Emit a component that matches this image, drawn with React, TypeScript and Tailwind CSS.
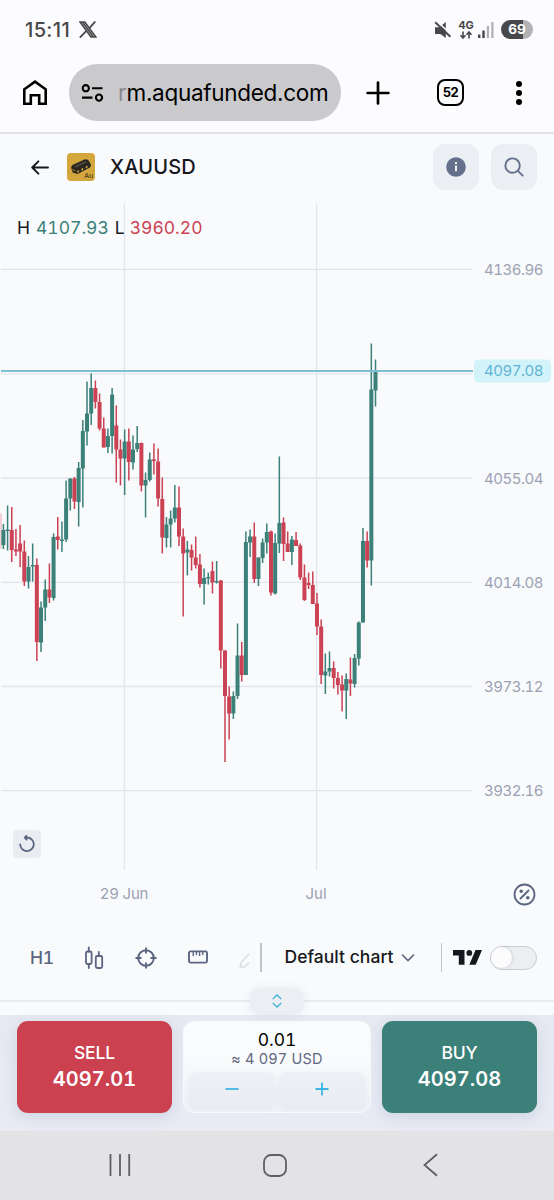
import type { ReactNode } from "react";

type Candle = ["u" | "d", number, number, number, number];

// direction, high, body top, body bottom, low (all in chart pixels)
const CANDLES: Candle[] = [
  ["u", 524, 530, 545, 549],
  ["u", 505.5, 529.5, 531, 550.5],
  ["d", 507, 530, 550, 562],
  ["d", 529, 549.5, 551.5, 556],
  ["d", 525, 543.5, 551.5, 567],
  ["d", 540.5, 551.5, 581.5, 586],
  ["u", 556, 567, 581.5, 588.5],
  ["u", 543.5, 565, 566.5, 581.5],
  ["d", 558.5, 565, 642, 661],
  ["u", 601.5, 607.5, 642.5, 652],
  ["u", 579.5, 589.5, 607.5, 621],
  ["d", 563.5, 589.5, 597.5, 603],
  ["u", 533.5, 537, 598, 600.5],
  ["d", 517, 536.5, 540, 549.5],
  ["u", 521.5, 539.5, 541, 552],
  ["u", 480.5, 498.5, 539.5, 542],
  ["u", 478.5, 478.5, 498.5, 510.5],
  ["d", 477, 478.5, 501.5, 509],
  ["u", 462, 468, 502, 526.5],
  ["u", 420, 431, 468.5, 507.5],
  ["u", 381.5, 413.5, 431.5, 445.5],
  ["u", 373.5, 388, 413.5, 425],
  ["d", 380.5, 388, 402, 408.5],
  ["d", 393.5, 402, 428.5, 430.5],
  ["d", 417.5, 428.5, 447.5, 447.5],
  ["u", 428.5, 436, 447, 453],
  ["u", 388, 394.5, 436, 453.5],
  ["d", 405.5, 425.5, 449.5, 482.5],
  ["d", 439.5, 449.5, 458.5, 485.5],
  ["u", 429.5, 441.5, 458.5, 495],
  ["d", 428.5, 441.5, 462, 480.5],
  ["u", 435.5, 449.5, 462.5, 469.5],
  ["u", 426, 443, 449, 452],
  ["d", 442.5, 443, 485.5, 491.5],
  ["u", 472.5, 480, 485.5, 517.5],
  ["u", 452.5, 459.5, 480, 481.5],
  ["d", 443.5, 459.5, 461, 474.5],
  ["d", 448.5, 461.5, 498.5, 506.5],
  ["d", 477.5, 499, 537.5, 553.5],
  ["u", 517, 524.5, 538, 547.5],
  ["u", 510.5, 518.5, 524.5, 547.5],
  ["u", 485, 507.5, 518.5, 522.5],
  ["d", 486.5, 507.5, 536.5, 546],
  ["d", 528.5, 536.5, 553.5, 616.5],
  ["u", 541, 549.5, 552.5, 575.5],
  ["d", 544.5, 550, 557.5, 570.5],
  ["d", 536.5, 557.5, 565, 568.5],
  ["d", 554, 564.5, 584, 587.5],
  ["u", 568.5, 578, 584, 604.5],
  ["u", 572.5, 577, 578.5, 584.5],
  ["d", 561.5, 571, 582.5, 593.5],
  ["u", 561, 581, 582.5, 583.5],
  ["d", 580, 580.5, 650.5, 668.5],
  ["d", 650.5, 650.5, 696, 762],
  ["d", 686.5, 696.5, 713.5, 739.5],
  ["u", 691.5, 696, 713.5, 719],
  ["u", 623.5, 655.5, 696, 699],
  ["d", 642, 655.5, 675, 681.5],
  ["u", 531.5, 542, 675, 675],
  ["u", 529.5, 536.5, 542.5, 557],
  ["d", 522.5, 536.5, 579, 583],
  ["u", 557.5, 557.5, 579, 586],
  ["u", 538.5, 542.5, 558, 563],
  ["u", 523.5, 532, 542.5, 553.5],
  ["d", 530.5, 531.5, 592.5, 595.5],
  ["u", 533.5, 543, 593.5, 594.5],
  ["u", 456.5, 523, 543.5, 553],
  ["d", 517.5, 522.5, 544, 561],
  ["d", 531.5, 543.5, 552, 552],
  ["u", 536, 539.5, 552, 565],
  ["d", 532, 540, 546, 546],
  ["d", 543.5, 545.5, 577.5, 580],
  ["d", 564.5, 577.5, 600, 601],
  ["d", 572.5, 583, 585, 589],
  ["d", 571.5, 585, 604, 604],
  ["d", 593, 603.5, 626.5, 635],
  ["d", 619.5, 626.5, 675, 684],
  ["u", 653.5, 671.5, 675.5, 694],
  ["u", 651.5, 668, 671.5, 676.5],
  ["d", 661.5, 668, 678, 688.5],
  ["d", 672, 678, 685, 694.5],
  ["d", 675.5, 684.5, 690.5, 711.5],
  ["u", 673.5, 679, 690.5, 719],
  ["d", 657.5, 679.5, 683.5, 696],
  ["u", 654, 658, 684, 687.5],
  ["u", 621.5, 622.5, 658.5, 665.5],
  ["u", 528, 541, 622.5, 622.5],
  ["d", 531.5, 541, 560.5, 567.5],
  ["u", 343.5, 389.5, 560.5, 585.5],
  ["u", 359.5, 370.5, 390.5, 406.5],
];

const UP = "#3b8179";
const DOWN = "#cb4254";

const PRICE_LINES = [
  { y: 269.3, label: "4136.96" },
  { y: 373.8, label: "" },
  { y: 478, label: "4055.04" },
  { y: 582.3, label: "4014.08" },
  { y: 686.5, label: "3973.12" },
  { y: 790.7, label: "3932.16" },
];

export default function App() {
  return (
    <div className="flex h-[1200px] w-[554px] flex-col overflow-hidden bg-[#f9fafc] font-['Inter',sans-serif] text-[#16181d]">
      <StatusBar />
      <BrowserBar />
      <SymbolHeader />
      <PriceChart />
      <TimeAxis />
      <ChartToolbar />
      <TradePanel />
      <SystemNav />
    </div>
  );
}

function StatusBar() {
  return (
    <div className="flex h-[60px] items-center justify-between bg-[#fcfcfe] pb-px pl-[25px] pr-[21px] text-[#48484a]">
      <div className="flex items-center gap-[9px]">
        <span className="text-[20px] font-medium leading-none tracking-[0.35px]">15:11</span>
        <svg className="h-[17px] w-[18px]" viewBox="0 0 18 17" fill="none" stroke="currentColor" strokeWidth="1.6">
          <path d="M1 1h4.8l11 15H12zM3.4 1l11 15" />
          <path d="M16.3.5 10.2 7.4M7.4 9.9.8 16.6" strokeWidth="1.8" />
        </svg>
      </div>
      <div className="flex items-center">
        <svg className="h-[18px] w-[18px]" viewBox="0 0 18 18" fill="currentColor">
          <path d="M1 6.2h4.4L11.8 1v16L6.5 13H1z" />
          <path d="M2.9.2 17.9 14.2" stroke="#fcfcfe" strokeWidth="1.6" />
          <path d="m1.2 1.2 15.2 14.6" stroke="currentColor" strokeWidth="1.9" />
        </svg>
        <div className="ml-[5px] flex w-[18px] flex-col items-center">
          <span className="text-[11px] font-bold leading-[9px]">4G</span>
          <svg className="mt-px h-2 w-3.5" viewBox="0 0 14 8" fill="none" stroke="currentColor" strokeWidth="1.6">
            <path d="M4 .5v6M1.5 4.3 4 7l2.5-2.7M10 7.5v-6M7.5 3.7 10 1l2.5 2.7" />
          </svg>
        </div>
        <svg className="ml-0.5 h-[18px] w-[18px]" viewBox="0 0 18 18" fill="currentColor">
          <rect x="1" y="13.5" width="2.4" height="3.5" />
          <rect x="5.3" y="9.5" width="2.4" height="7.5" />
          <rect x="9.8" y="5" width="2.2" height="12" fill="#b0b0b3" />
          <rect x="14.3" y="1" width="2.2" height="16" fill="#b0b0b3" />
        </svg>
        <div className="ml-[6px] flex h-[19px] w-[32px] items-center justify-center rounded-full bg-linear-to-r from-[#48484a] from-68% to-[#b2b2b4] to-68% text-[13.5px] font-bold leading-none text-white">
          69
        </div>
      </div>
    </div>
  );
}

function BrowserBar() {
  return (
    <div className="flex h-[74px] items-center border-b-2 border-[#e0e1e9] bg-[#fcfcfe] pl-[22px] pb-[7px] text-black">
      <svg className="h-[27px] w-[26px]" viewBox="0 0 26 27" fill="none" stroke="currentColor" strokeWidth="2.6">
        <path d="M2.3 10.3v14.4h6.5v-8.4h8.4v8.4h6.5V10.3L13 2.7z" />
      </svg>
      <div className="ml-[21px] flex h-[57px] w-[272px] shrink-0 items-center rounded-full bg-[#cacacc] pl-3">
        <svg className="h-5 w-[23px]" viewBox="0 0 23 20" fill="none" stroke="currentColor" strokeWidth="2.1">
          <circle cx="4.8" cy="5.2" r="3.1" />
          <circle cx="18" cy="14.6" r="3.1" />
          <path d="M11 5.2h10.5M1 14.6h10.5" />
        </svg>
        <span className="ml-[14px] whitespace-nowrap text-[22.5px] tracking-[-0.3px]">
          <span className="text-[#8a8a8c]">r</span>m.aquafunded.com
        </span>
      </div>
      <svg className="ml-[25px] h-6 w-6" viewBox="0 0 24 24" stroke="currentColor" strokeWidth="2.7" strokeLinecap="round">
        <path d="M12 1.6v20.8M1.6 12h20.8" />
      </svg>
      <div className="ml-[47px] flex h-[27px] w-[27px] items-center justify-center rounded-[8px] border-[2.5px] border-black text-[13px] font-bold leading-none tracking-[-0.6px]">
        52
      </div>
      <div className="ml-[52px] flex flex-col gap-[3px]">
        <span className="h-[6px] w-[6px] rounded-full bg-black" />
        <span className="h-[6px] w-[6px] rounded-full bg-black" />
        <span className="h-[6px] w-[6px] rounded-full bg-black" />
      </div>
    </div>
  );
}

function SymbolHeader() {
  return (
    <div className="flex h-[69px] shrink-0 items-center pl-[31px] pr-[17px] pb-[3px]">
      <svg className="h-[15px] w-[18px]" viewBox="0 0 18 15" fill="none" stroke="currentColor" strokeWidth="1.9" strokeLinecap="round" strokeLinejoin="round">
        <path d="M17 7.5H1.2M7.4 1.3 1.2 7.5l6.2 6.2" />
      </svg>
      <svg className="ml-[18px] h-[28px] w-[28px]" viewBox="0 0 28 28">
        <rect width="28" height="28" rx="4" fill="#d3a63e" />
        <path d="M4 14.2 5.5 12 18 6.3l3 .4 3 4.8-.6 2.7L10.6 21l-4.9-1.6z" fill="#29261f" />
        <path d="m6.8 13.4 11-5.2 2.6.8L9.5 14.6z" fill="#4a463d" />
        <path d="m9.7 19 1.6-2 1 1.1-1.2 1.6zM14 17l1.5-2.2 1 1-1.2 1.9zM18.4 14.8l1.5-2.2 1 1-1.2 1.9z" fill="#d3a63e" />
        <path d="m5.2 16.6 3.4 1.2" stroke="#d3a63e" strokeWidth=".7" />
        <text x="17.2" y="24.6" fontSize="6.8" fontWeight="500" fill="#4a3a17">Au</text>
      </svg>
      <h1 className="ml-[15px] text-[20px] font-medium leading-none tracking-[0.2px]">XAUUSD</h1>
      <div className="ml-auto flex gap-3">
        <IconButton>
          <svg className="h-[20px] w-[20px]" viewBox="0 0 20 20">
            <circle cx="10" cy="10" r="9.8" fill="#65708b" />
            <path d="M10 8.6v5.6M10 5v2" stroke="#f4f6fa" strokeWidth="1.9" />
          </svg>
        </IconButton>
        <IconButton>
          <svg className="h-[20px] w-[20px]" viewBox="0 0 21 21" fill="none" stroke="#65708b" strokeWidth="2" strokeLinecap="round">
            <circle cx="9" cy="9" r="7.6" />
            <path d="m14.6 14.6 5 5" />
          </svg>
        </IconButton>
      </div>
    </div>
  );
}

function IconButton({ children }: { children: ReactNode }) {
  return (
    <button className="flex h-[46px] w-[46px] items-center justify-center rounded-[12px] bg-[#ebeef3]">
      {children}
    </button>
  );
}

function PriceChart() {
  return (
    <div className="relative h-[667px] shrink-0 tabular-nums">
      <svg className="block h-[667px] w-[554px]" viewBox="0 203 554 667">
        <g stroke="#e1e5ed" strokeWidth="1.3">
          {PRICE_LINES.map((line) => (
            <path key={line.y} d={`M1 ${line.y}H472`} />
          ))}
          <path d="M124.4 203v667M316.6 203v667" />
        </g>
        <path d="M1 513.5v35" stroke="#e7a9b2" strokeWidth="1" />
        {CANDLES.map(([dir, high, top, bottom, low], i) => {
          const x = 3.4 + i * 4.181;
          const color = dir === "u" ? UP : DOWN;
          return (
            <g key={i} fill={color}>
              <rect x={x - 0.75} y={high} width={1.5} height={low - high} />
              <rect x={x - 2} y={top} width={4} height={Math.max(bottom - top, 1.4)} />
            </g>
          );
        })}
        <path d="M1 371H473" stroke="#7fbfd3" strokeWidth="2" />
        <rect x="474" y="359.5" width="77" height="23" rx="4.5" fill="#d3f3fb" />
        <g fontSize="15" fill="#9ba2b4">
          {PRICE_LINES.filter((line) => line.label).map((line) => (
            <text key={line.label} x="484" y={line.y + 5.7} textLength="59.5">
              {line.label}
            </text>
          ))}
          <text x="484" y="375.9" textLength="59.5" fill="#62b4d3">
            4097.08
          </text>
        </g>
      </svg>
      <div className="absolute left-[17px] top-[14px] flex text-[17.5px] leading-[22px]">
        <span>H</span>
        <span className="ml-[6px] text-[#3b8179]">4107.93</span>
        <span className="ml-[6px]">L</span>
        <span className="ml-[5px] text-[#cb4254]">3960.20</span>
      </div>
      <button className="absolute left-[13px] top-[627px] flex h-[28px] w-[28px] items-center justify-center rounded-[4px] bg-[#e9edf2]">
        <svg className="h-[18px] w-[18px]" viewBox="0 0 18 18" fill="none" stroke="#5b6580" strokeWidth="1.8" strokeLinecap="round" strokeLinejoin="round">
          <path d="M2.2 9.5a6.8 6.8 0 1 0 6.6-7M8.8 2.5 6.8 2.7M8.5.8 6.7 2.7l1.9 1.9" />
        </svg>
      </button>
    </div>
  );
}

function TimeAxis() {
  return (
    <div className="flex h-[48px] shrink-0 items-center pr-[18px] text-[15px] tabular-nums text-[#9ba2b4]">
      <span className="w-[248px] text-center tracking-[-0.2px]">29 Jun</span>
      <span className="ml-[27px] w-[82px] text-center">Jul</span>
      <svg className="ml-auto h-[23px] w-[23px]" viewBox="0 0 23 23" fill="none" stroke="#5b6580" strokeWidth="1.8" strokeLinecap="round">
        <circle cx="11.5" cy="11.5" r="10" />
        <path d="m7.5 15.5 8-8" />
        <circle cx="8.2" cy="8.3" r=".9" fill="#5b6580" />
        <circle cx="14.8" cy="14.8" r=".9" fill="#5b6580" />
      </svg>
    </div>
  );
}

function ChartToolbar() {
  return (
    <div className="flex h-[78px] shrink-0 items-center pl-[30px] pr-[17px] text-[#5b6580]">
      <span className="mt-px w-[24px] text-[17.5px] font-medium leading-none tracking-[-0.3px] tabular-nums">H1</span>
      <svg className="ml-[30px] mt-[2px] h-[24px] w-[20px]" viewBox="0 0 20 24" fill="none" stroke="currentColor" strokeWidth="1.8" strokeLinecap="round">
        <rect x="2" y="5.5" width="5.6" height="12.5" rx="1.5" />
        <path d="M4.8 1.5v4M4.8 18v4M14.8 6v4" />
        <rect x="11.8" y="10" width="6.4" height="12" rx="1.5" />
      </svg>
      <svg className="ml-[31px] mt-px h-[22px] w-[22px]" viewBox="0 0 22 22" fill="none" stroke="currentColor" strokeWidth="1.9" strokeLinecap="round">
        <circle cx="11" cy="11" r="7.8" />
        <path d="M11 1.2v4.6M11 16.2v4.6M1.2 11h4.6M16.2 11h4.6" />
      </svg>
      <svg className="ml-[31px] h-[14px] w-[20px]" viewBox="0 0 20 14" fill="none" stroke="currentColor" strokeWidth="1.9">
        <rect x="1" y="1.4" width="18" height="11.2" rx="1.5" />
        <path d="M5.3 2v4M8.5 2v3M11.6 2v4M14.8 2v3" strokeWidth="1.4" />
      </svg>
      <svg className="ml-[31px] mt-2 h-[16px] w-[12px]" viewBox="0 0 12 16" fill="none" stroke="#dfe0e4" strokeWidth="1.8">
        <path d="M10 1 2.2 9.5 1.4 14l4.6-.4L10 9.5" />
      </svg>
      <div className="ml-[9px] h-[29px] w-[1.5px] bg-[#bfc3cc]" />
      <span className="ml-[23px] whitespace-nowrap text-[17.5px] font-medium leading-none tracking-[0.03px] text-[#16181d]">Default chart</span>
      <svg className="ml-[8px] mt-px h-2 w-3.5" viewBox="0 0 14 8" fill="none" stroke="currentColor" strokeWidth="1.6" strokeLinecap="round">
        <path d="m1.5 1 5.5 5.5L12.5 1" />
      </svg>
      <div className="ml-auto flex items-center">
        <div className="h-[29px] w-[1.5px] bg-[#bfc3cc]" />
        <svg className="ml-[11px] h-[15px] w-[29px]" viewBox="0 0 29 15" fill="#16181d">
          <path d="M0 0h11.5v14.8H5.8V5.6H0zM22.5 0H29l-6.3 14.8h-6.4z" />
          <circle cx="16.3" cy="2.9" r="2.9" />
        </svg>
        <div className="ml-2 mt-px flex h-[24px] w-[47px] items-center rounded-full border-[1.5px] border-[#c9ccd4] bg-[#eceef2]">
          <span className="h-[21px] w-[21px] rounded-full bg-[#fcfcfd] shadow-[1px_0_3px_rgba(80,90,110,0.18)]" />
        </div>
      </div>
    </div>
  );
}

function TradePanel() {
  return (
    <div className="relative shrink-0 tabular-nums">
      <div className="h-[4px]" />
      <div className="h-[15px] border-t-2 border-[#e8eaef]" />
      <div className="absolute left-[250px] top-[-8px] flex h-[27px] w-[54px] items-center justify-center rounded-[10px] bg-[#ebeff4] shadow-[0_0_10px_rgba(150,165,190,0.18)]">
        <svg className="mb-[2px] h-[14px] w-[10px]" viewBox="0 0 10 14" fill="none" stroke="#43b3d8" strokeWidth="1.4">
          <path d="m.8 5 4.2-4 4.2 4M.8 9 5 13l4.2-4" />
        </svg>
      </div>
      <div className="flex h-[116px] items-start gap-[11px] bg-linear-to-b from-[#e6e9f1] to-[#e8ebf4] px-[17px] pt-[6px]">
        <PriceButton side="SELL" price="4097.01" tone="bg-[#cb4150]" />
        <div className="flex h-[92px] w-[188px] shrink-0 flex-col items-center rounded-[11px] border border-[#f8f9fc] bg-linear-to-b from-[#fafbfd] from-40% to-[#edf0f5] pt-[9px]">
          <span className="text-[17.5px] leading-[18px] text-black">0.01</span>
          <span className="text-[14.5px] leading-[20px] tracking-[0.2px] text-[#5f6880]">≈ 4 097 USD</span>
          <div className="mt-[3px] flex w-full gap-[4px] px-[5px] text-[#3fb4e2]">
            <StepButton path="M.5 7h13" />
            <StepButton path="M.5 7h13M7 .5v13" />
          </div>
        </div>
        <PriceButton side="BUY" price="4097.08" tone="bg-[#3b8179]" />
      </div>
    </div>
  );
}

function PriceButton({ side, price, tone }: { side: string; price: string; tone: string }) {
  return (
    <button
      className={`flex h-[92px] w-[155px] shrink-0 flex-col items-center justify-center rounded-[11px] text-white shadow-[0_4px_14px_rgba(120,135,175,0.22)] ${tone}`}
    >
      <span className="text-[17.5px] font-medium leading-[24px] tracking-[-0.15px]">{side}</span>
      <span className="text-[20px] font-semibold leading-[28px] tracking-[0.1px]">{price}</span>
    </button>
  );
}

function StepButton({ path }: { path: string }) {
  return (
    <button className="flex h-[35px] flex-1 items-center justify-center rounded-[9px] bg-linear-to-b from-[#edf0f5] to-[#e9edf3] pb-px shadow-[0_1px_5px_rgba(140,155,180,0.12)]">
      <svg className="h-3.5 w-3.5" viewBox="0 0 14 14" stroke="currentColor" strokeWidth="1.8">
        <path d={path} />
      </svg>
    </button>
  );
}

function SystemNav() {
  return (
    <div className="flex flex-1 items-center bg-[#e3e3e5] pl-[109px] pb-[1px]">
      <svg className="h-[22px] w-[22px]" viewBox="0 0 22 22" stroke="#5f5f62" strokeWidth="1.8">
        <path d="M1.5 0v22M11 0v22M20.2 0v22" />
      </svg>
      <svg className="ml-[132px] h-[23px] w-[24px]" viewBox="0 0 24 23" fill="none" stroke="#5f5f62" strokeWidth="1.8">
        <rect x="1" y="1" width="22" height="21" rx="7" />
      </svg>
      <svg className="ml-[136px] h-[24px] w-[15px]" viewBox="0 0 15 24" fill="none" stroke="#5f5f62" strokeWidth="1.8">
        <path d="M14 1.2 1.5 12 14 22.8" />
      </svg>
    </div>
  );
}
